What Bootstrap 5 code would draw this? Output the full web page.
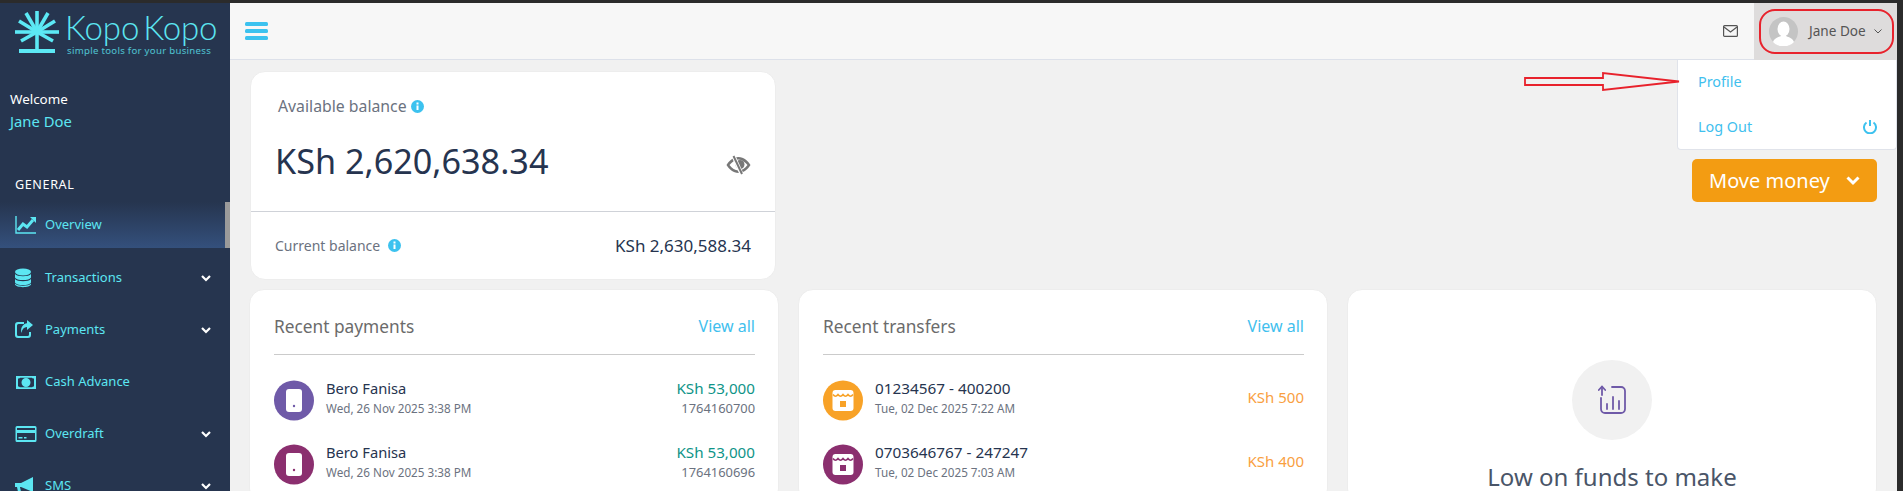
<!DOCTYPE html>
<html lang="en">
<head>
  <meta charset="UTF-8" />
  <title>Kopo Kopo Dashboard</title>
  <meta name="viewport" content="width=device-width, initial-scale=1" />
  <link href="https://cdn.jsdelivr.net/npm/bootstrap@5.3.3/dist/css/bootstrap.min.css" rel="stylesheet">
  <style>
    html, body {
      height: 100%;
      overflow: hidden;
    }
    body {
      background: #f1f1f1;
      border-top: 3px solid #2b2b2b;
      border-right: 6px solid #2b2b2b;
      font-family: "Noto Sans", "Open Sans", sans-serif;
      color: #26344f;
    }
    .app-shell { height: 488px; overflow: hidden; }
    .side-panel {
      width: 230px;
      flex-shrink: 0;
      background: #26354f;
      color: #5ce6f2;
    }
    .logo-box { height: 57px; padding: 8px 0 0 15px; }
    .logo-text { margin-left: 6px; }
    .logo-name {
      font-family: "Lato", sans-serif;
      font-weight: 300;
      font-size: 33px;
      line-height: 33px;
      letter-spacing: -.1px;
      word-spacing: -5px;
    }
    .logo-tag {
      font-size: 9.600px;
      line-height: 13px;
      opacity: .8;
      letter-spacing: .3px;
      margin-left: 2px;
    }
    .welcome-box { padding: 30px 0 0 10px; height: 116px; }
    .welcome-label { color: #fff; font-size: 13.400px; line-height: 18px; }
    .welcome-name { font-size: 14.800px; line-height: 26px; }
    .side-title { color: #fff; font-size: 12.600px; letter-spacing: .6px; padding-left: 15px; line-height: 18px; }
    .side-link {
      height: 52px;
      padding: 0 19px 0 15px;
      font-size: 13px;
      color: #5ce6f2;
      text-decoration: none;
    }
    .side-link svg.item-icon { width: 22px; height: 20px; margin-right: 8px; flex-shrink: 0; }
    .side-active {
      height: 46px;
      margin-top: 8px;
      margin-bottom: 4px;
      background: linear-gradient(#26354f, #34507c);
      border-right: 5px solid #9a9a9a;
      padding-right: 14px;
    }
    .top-strip {
      height: 57px;
      flex-shrink: 0;
      background: #f7f7f7;
      border-bottom: 1px solid #dde1ea;
      padding-left: 15px;
    }
    .menu-btn { width: 23px; display: block; }
    .user-box {
      width: 143px;
      height: 57px;
      background: #dedcdc;
      font-size: 13.600px;
      color: #555;
      padding-left: 15px;
    }
    .avatar-round { width: 29px; height: 29px; margin-right: 11px; }
    .red-ring {
      position: absolute;
      left: 5px;
      top: 6px;
      width: 135px;
      height: 45px;
      border: 2px solid #e8222c;
      border-radius: 16px;
    }
    .drop-menu {
      position: absolute;
      top: 57px;
      right: 0;
      width: 220px;
      height: 90px;
      background: #fff;
      border: 1px solid #e0e3ea;
      border-top: 0;
      border-radius: 0 0 4px 4px;
      font-size: 14.400px;
      color: #3fc0ee;
      z-index: 5;
    }
    .drop-row { height: 44px; padding: 0 19px 0 20px; }
    .drop-row-first { height: 45px; }
    .arrow-mark { position: absolute; left: 1524px; top: 69px; z-index: 6; }
    .main-area { padding: 11px 20px 0 19px; flex-grow: 1; min-height: 0; overflow: hidden; }
    .money-btn {
      position: absolute;
      right: 20px;
      top: 156px;
      width: 185px;
      height: 43px;
      background: #f39c12;
      color: #fff;
      font-size: 20px;
      border: 0;
      border-radius: 5px;
      padding: 0 17px;
    }
    .white-panel {
      background: #fff;
      border-radius: 15px;
      border: 1px solid #ededed;
    }
    .balance-panel { width: 526px; height: 209px; margin-left: 1px; }
    .balance-top { height: 140px; padding: 24px 24px 0 27px; border-bottom: 1px solid #cfd2d8; }
    .soft-label { color: #6b7280; font-size: 15.800px; line-height: 20px; }
    .low-label { font-size: 14px; }
    .info-dot { width: 13px; height: 13px; }
    .big-money { font-size: 34.200px; line-height: 44px; color: #26344f; margin-top: 23px; margin-left: -3px; }
    .eye-mark { width: 25px; height: 20px; margin-top: 31px; }
    .balance-low { height: 67px; padding: 0 24px; }
    .low-amount { font-size: 17px; }
    .three-grid {
      display: grid;
      grid-template-columns: repeat(3, 1fr);
      gap: 19px;
      margin-top: 9px;
    }
    .list-panel { height: 215px; padding: 25px 23px 0 24px; overflow: hidden; }
    .panel-head { font-size: 17.300px; color: #6b6b6b; padding-bottom: 16px; line-height: 23px; border-bottom: 1px solid #cbcbcb; margin-bottom: 25px; }
    .view-all { color: #3fc0ee; font-size: 16px; text-decoration: none; }
    .pay-row { height: 41px; margin-bottom: 23px; }
    .pay-circle { width: 40px; height: 41px; margin-right: 12px; flex-shrink: 0; }
    .pay-text { padding-bottom: 5px; }
    .pay-name { font-size: 14.700px; line-height: 20px; color: #26344f; }
    .digit-name { font-size: 15.300px; }
    .pay-date { font-size: 11.700px; line-height: 20px; color: #6b7280; }
    .amount-green { font-size: 15.200px; line-height: 20px; color: #0f9488; }
    .amount-ref { font-size: 12.900px; line-height: 20px; color: #6b7280; }
    .amount-orange { font-size: 15px; color: #f9a03f; padding-bottom: 6px; }
    .empty-panel { height: 215px; padding-top: 70px; text-align: center; overflow: hidden; }
    .grey-round { width: 80px; height: 80px; border-radius: 50%; background: #f1f1f1; }
    .empty-title { font-size: 24px; line-height: 32px; color: #4a5568; margin-top: 21px; }
  </style>
</head>
<body>

<div class="app-shell d-flex position-relative">
  <aside class="side-panel">
    <div class="logo-box d-flex">
      <svg width="44" height="43" viewBox="0 0 44 43" class="flex-shrink-0" fill="#5ce9f5" stroke="#5ce9f5">
        <g stroke-width="3.600">
          <line x1="22" y1="21" x2="22" y2="0"/>
          <line x1="22" y1="21" x2="11" y2="2"/>
          <line x1="22" y1="21" x2="33" y2="2"/>
          <line x1="22" y1="21" x2="4" y2="10"/>
          <line x1="22" y1="21" x2="40" y2="10"/>
          <line x1="22" y1="21" x2="0" y2="21"/>
          <line x1="22" y1="21" x2="44" y2="21"/>
          <line x1="22" y1="21" x2="6" y2="30"/>
          <line x1="22" y1="21" x2="38" y2="30"/>
          <line x1="22" y1="21" x2="22" y2="38"/>
        </g>
        <rect x="4" y="38" width="36" height="4" stroke="none"/>
      </svg>
      <div class="logo-text">
        <div class="logo-name">Kopo Kopo</div>
        <div class="logo-tag">simple tools for your business</div>
      </div>
    </div>
    <div class="welcome-box">
      <div class="welcome-label">Welcome</div>
      <div class="welcome-name">Jane Doe</div>
    </div>
    <div class="side-title">GENERAL</div>
    <a class="side-link side-active d-flex align-items-center" href="#">
      <svg class="item-icon" viewBox="0 0 22 20" fill="none" stroke="#5ce6f2"><path d="M1 1v17h20" stroke-width="1.400"/><path d="M3 15l5-6 4 3 6-7" stroke-width="3"/><path d="M15 2h6v6z" fill="#5ce6f2" stroke="none"/></svg>
      Overview
    </a>
    <a class="side-link d-flex align-items-center" href="#">
      <svg class="item-icon" viewBox="0 0 22 20" fill="#5ce6f2"><ellipse cx="8" cy="4" rx="8" ry="3.400"/><path d="M0 6c2 3 14 3 16 0v3.400c-1 3.400-15 3.400-16 0z"/><path d="M0 11c2 3 14 3 16 0v3.400c-1 3.400-15 3.400-16 0z"/><path d="M0 15.600c2 3 14 3 16 0v1c-1 3.400-15 3.400-16 0z"/></svg>
      <span class="flex-grow-1">Transactions</span>
      <svg width="10" height="7" viewBox="0 0 10 7" fill="none" stroke="#fff" stroke-width="2.200"><path d="M1 1l4 4 4-4"/></svg>
    </a>
    <a class="side-link d-flex align-items-center" href="#">
      <svg class="item-icon" viewBox="0 0 22 20" fill="#5ce6f2"><path d="M3 2h6v2H3.500a1.500 1.500 0 0 0-1.500 1.500v9A1.500 1.500 0 0 0 3.500 16h9a1.500 1.500 0 0 0 1.500-1.500V12h2v3a3 3 0 0 1-3 3H3a3 3 0 0 1-3-3V5a3 3 0 0 1 3-3z"/><path d="M12 0l6 5-6 5V7C9 7 7 9 6.500 13 5 8 8 3.500 12 3.200z"/></svg>
      <span class="flex-grow-1">Payments</span>
      <svg width="10" height="7" viewBox="0 0 10 7" fill="none" stroke="#fff" stroke-width="2.200"><path d="M1 1l4 4 4-4"/></svg>
    </a>
    <a class="side-link d-flex align-items-center" href="#">
      <svg class="item-icon" viewBox="0 0 22 20" fill="#5ce6f2"><path fill-rule="evenodd" d="M1 4h20v13H1zM3 6.500c1.500 0 2-.8 2-.8h12s.5.800 2 .8v8c-1.500 0-2 .8-2 .8H5s-.5-.8-2-.8zM11 6a4.500 4.500 0 1 0 0 9 4.500 4.500 0 0 0 0-9z"/><rect x="10" y="7.500" width="2" height="6"/></svg>
      Cash Advance
    </a>
    <a class="side-link d-flex align-items-center" href="#">
      <svg class="item-icon" viewBox="0 0 22 20" fill="#5ce6f2"><path fill-rule="evenodd" d="M2 2h18a1.500 1.500 0 0 1 1.500 1.500v13A1.500 1.500 0 0 1 20 18H2a1.500 1.500 0 0 1-1.500-1.500v-13A1.500 1.500 0 0 1 2 2zM2 4v2h18V4zM2 9v7h18V9z"/><rect x="3.500" y="13" width="4" height="1.500"/><rect x="9" y="13" width="2.500" height="1.500"/></svg>
      <span class="flex-grow-1">Overdraft</span>
      <svg width="10" height="7" viewBox="0 0 10 7" fill="none" stroke="#fff" stroke-width="2.200"><path d="M1 1l4 4 4-4"/></svg>
    </a>
    <a class="side-link d-flex align-items-center" href="#">
      <svg class="item-icon" viewBox="0 0 22 20" fill="#5ce6f2"><path d="M0 7h6L18 1v15L6 11H5l1.500 7h-3L2 11H0z"/></svg>
      <span class="flex-grow-1">SMS</span>
      <svg width="10" height="7" viewBox="0 0 10 7" fill="none" stroke="#fff" stroke-width="2.200"><path d="M1 1l4 4 4-4"/></svg>
    </a>
  </aside>

  <div class="flex-grow-1 d-flex flex-column" style="min-width:0">
    <header class="top-strip d-flex align-items-center justify-content-between">
      <svg class="menu-btn" viewBox="0 0 23 20" fill="#3cc2ef"><rect y="1" width="23" height="4" rx="1.500"/><rect y="8" width="23" height="4" rx="1.500"/><rect y="15" width="23" height="4" rx="1.500"/></svg>
      <div class="d-flex align-items-center">
        <svg class="me-3" width="15" height="12" viewBox="0 0 15 12" fill="none" stroke="#555" stroke-width="1.200"><rect x=".6" y=".6" width="13.800" height="10.800" rx="1"/><path d="M1 2l6.500 5L14 2"/></svg>
        <div class="user-box d-flex align-items-center position-relative">
          <svg class="avatar-round flex-shrink-0" viewBox="0 0 29 29"><circle cx="14.500" cy="14.500" r="14.500" fill="#c4c4c4"/><ellipse cx="14.500" cy="12" rx="6" ry="7.500" fill="#fff"/><path d="M4 25c2-5 7-5 8-6h5c1 1 6 1 8 6a14.500 14.500 0 0 1-21 0z" fill="#fff"/></svg>
          <span>Jane Doe</span>
          <svg class="ms-2" width="8" height="5" viewBox="0 0 8 5" fill="none" stroke="#555" stroke-width="1"><path d="M.5.500L4 4 7.500.5"/></svg>
          <div class="red-ring"></div>
          <div class="drop-menu">
            <div class="drop-row drop-row-first d-flex align-items-center">Profile</div>
            <div class="drop-row d-flex align-items-center justify-content-between">
              <span>Log Out</span>
              <svg width="14" height="15" viewBox="0 0 14 15" fill="none" stroke="#3cc2ef" stroke-width="2"><path d="M7 1v6"/><path d="M3.500 3.500a6 6 0 1 0 7 0"/></svg>
            </div>
          </div>
        </div>
      </div>
    </header>

    <main class="main-area">
      <div class="white-panel balance-panel">
        <div class="balance-top">
          <div class="soft-label d-flex align-items-center">
            Available balance
            <svg class="info-dot ms-1" viewBox="0 0 13 13"><circle cx="6.500" cy="6.500" r="6.500" fill="#3cc2ef"/><rect x="5.500" y="5.500" width="2" height="4.500" fill="#fff"/><rect x="5.500" y="2.500" width="2" height="2" fill="#fff"/></svg>
          </div>
          <div class="d-flex justify-content-between align-items-center">
            <div class="big-money">KSh 2,620,638.34</div>
            <svg class="eye-mark" viewBox="0 0 25 20"><path fill="#777" fill-rule="evenodd" d="M12.500 2C7 2 3 6 .5 10 3 14 7 18 12.500 18S22 14 24.500 10C22 6 18 2 12.500 2zm0 2.500C9 4.500 6 7 3.500 10c2.500 3 5.500 5.500 9 5.500s6.500-2.500 9-5.500c-2.500-3-5.500-5.500-9-5.500z"/><circle cx="14" cy="9.500" r="4.500" fill="#777"/><path d="M7 0l9 20" stroke="#fff" stroke-width="4"/><path d="M7.500 1l8.500 18" stroke="#777" stroke-width="2"/></svg>
          </div>
        </div>
        <div class="balance-low d-flex align-items-center justify-content-between">
          <div class="soft-label low-label d-flex align-items-center">
            Current balance
            <svg class="info-dot ms-2" viewBox="0 0 13 13"><circle cx="6.500" cy="6.500" r="6.500" fill="#3cc2ef"/><rect x="5.500" y="5.500" width="2" height="4.500" fill="#fff"/><rect x="5.500" y="2.500" width="2" height="2" fill="#fff"/></svg>
          </div>
          <div class="low-amount">KSh 2,630,588.34</div>
        </div>
      </div>

      <div class="three-grid">
        <div class="white-panel list-panel">
          <div class="panel-head d-flex justify-content-between align-items-center">
            <span>Recent payments</span><a class="view-all" href="#">View all</a>
          </div>
          <div class="pay-row d-flex align-items-center">
            <svg class="pay-circle" viewBox="0 0 40 41"><circle cx="20" cy="20.500" r="20" fill="#6f5aa8"/><rect x="12" y="9" width="16" height="23" rx="3" fill="#fff"/><circle cx="20" cy="26" r="1.200" fill="#6f5aa8"/></svg>
            <div class="pay-text flex-grow-1">
              <div class="pay-name">Bero Fanisa</div>
              <div class="pay-date">Wed, 26 Nov 2025 3:38 PM</div>
            </div>
            <div class="pay-text text-end">
              <div class="amount-green">KSh 53,000</div>
              <div class="amount-ref">1764160700</div>
            </div>
          </div>
          <div class="pay-row d-flex align-items-center">
            <svg class="pay-circle" viewBox="0 0 40 41"><circle cx="20" cy="20.500" r="20" fill="#8b2f6f"/><rect x="12" y="9" width="16" height="23" rx="3" fill="#fff"/><circle cx="20" cy="26" r="1.200" fill="#8b2f6f"/></svg>
            <div class="pay-text flex-grow-1">
              <div class="pay-name">Bero Fanisa</div>
              <div class="pay-date">Wed, 26 Nov 2025 3:38 PM</div>
            </div>
            <div class="pay-text text-end">
              <div class="amount-green">KSh 53,000</div>
              <div class="amount-ref">1764160696</div>
            </div>
          </div>
        </div>

        <div class="white-panel list-panel">
          <div class="panel-head d-flex justify-content-between align-items-center">
            <span>Recent transfers</span><a class="view-all" href="#">View all</a>
          </div>
          <div class="pay-row d-flex align-items-center">
            <svg class="pay-circle" viewBox="0 0 40 41"><circle cx="20" cy="20.500" r="20" fill="#f8a227"/><rect x="9.500" y="10" width="21" height="21" rx="3" fill="#fff"/><path d="M10 14.500q2.500 3.500 5 0q2.500 3.500 5 0q2.500 3.500 5 0q2.500 3.500 5 0" fill="none" stroke="#f8a227" stroke-width="1.500"/><rect x="17" y="21" width="6" height="6" fill="#f8a227"/></svg>
            <div class="pay-text flex-grow-1">
              <div class="pay-name digit-name">01234567 - 400200</div>
              <div class="pay-date">Tue, 02 Dec 2025 7:22 AM</div>
            </div>
            <div class="amount-orange">KSh 500</div>
          </div>
          <div class="pay-row d-flex align-items-center">
            <svg class="pay-circle" viewBox="0 0 40 41"><circle cx="20" cy="20.500" r="20" fill="#8b2f6f"/><rect x="9.500" y="10" width="21" height="21" rx="3" fill="#fff"/><path d="M10 14.500q2.500 3.500 5 0q2.500 3.500 5 0q2.500 3.500 5 0q2.500 3.500 5 0" fill="none" stroke="#8b2f6f" stroke-width="1.500"/><rect x="17" y="21" width="6" height="6" fill="#8b2f6f"/></svg>
            <div class="pay-text flex-grow-1">
              <div class="pay-name digit-name">0703646767 - 247247</div>
              <div class="pay-date">Tue, 02 Dec 2025 7:03 AM</div>
            </div>
            <div class="amount-orange">KSh 400</div>
          </div>
        </div>

        <div class="white-panel empty-panel">
          <div class="grey-round d-flex align-items-center justify-content-center mx-auto">
            <svg width="28" height="30" viewBox="0 0 28 30" fill="none" stroke="#6f5aa8" stroke-width="1.800" stroke-linecap="round"><path d="M3 13v11a4 4 0 0 0 4 4h16a4 4 0 0 0 4-4V6a4 4 0 0 0-4-4h-9"/><path d="M.8 5L4 1.500 7.200 5" /><path d="M4 2v8"/><path d="M9 19v5M15 12v12M21 16v8"/></svg>
          </div>
          <div class="empty-title">Low on funds to make</div>
        </div>
      </div>
    </main>
  </div>

  <svg class="arrow-mark" width="157" height="20" viewBox="0 0 157 20" fill="none" stroke="#e8222c" stroke-width="1.800"><path d="M1 6h78V1l76 8.500L79 18v-5H1z"/></svg>
  <button class="money-btn d-flex align-items-center justify-content-between" type="button">
    Move money
    <svg width="14" height="10" viewBox="0 0 14 10" fill="none" stroke="#fff" stroke-width="3"><path d="M1.500 1.500L7 7l5.500-5.500"/></svg>
  </button>
</div>

<script src="https://cdn.jsdelivr.net/npm/bootstrap@5.3.3/dist/js/bootstrap.bundle.min.js"></script>
</body>
</html>
